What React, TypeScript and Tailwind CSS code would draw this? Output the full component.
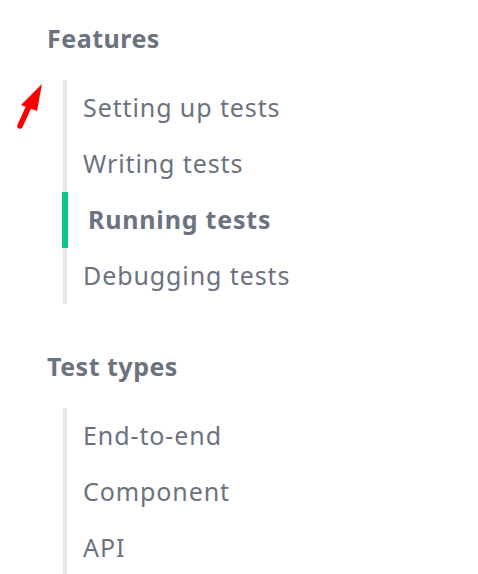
import React from 'react'

const sections = [
  {
    title: 'Features',
    items: ['Setting up tests', 'Writing tests', 'Running tests', 'Debugging tests'],
    active: 'Running tests',
  },
  {
    title: 'Test types',
    items: ['End-to-end', 'Component', 'API'],
    active: '',
  },
]

export default function App() {
  return (
    <div
      className="relative min-h-screen bg-white pl-[47px] pt-5 text-[#6b7280]"
      style={{ fontFamily: '"Noto Sans", sans-serif' }}
    >
      {/* red pointer annotation */}
      <svg className="absolute left-[14px] top-[80px]" width="32" height="52" viewBox="0 0 32 52">
        <path d="M6 46 L16 24" stroke="#ff0000" strokeWidth="5.5" strokeLinecap="round" />
        <path d="M28 4 L7 25 L23 31 Z" fill="#ff0000" />
      </svg>

      {sections.map((s, i) => (
        <div key={s.title} className={i > 0 ? 'mt-[44px]' : ''}>
          <h2 className="h-9 text-[25px] font-bold leading-9 tracking-[0.5px]">{s.title}</h2>
          <ul className="ml-4 mt-6 border-l-4 border-[#e5e7eb]">
            {s.items.map((item) =>
              item === s.active ? (
                <li
                  key={item}
                  className="-ml-[5px] flex h-14 items-center border-l-[6px] border-[#10c48c] pl-5 text-[25px] font-bold tracking-[0.8px]"
                >
                  {item}
                </li>
              ) : (
                <li key={item} className="flex h-14 items-center pl-4 text-[25px] tracking-[0.9px]">
                  {item}
                </li>
              ),
            )}
          </ul>
        </div>
      ))}
    </div>
  )
}
